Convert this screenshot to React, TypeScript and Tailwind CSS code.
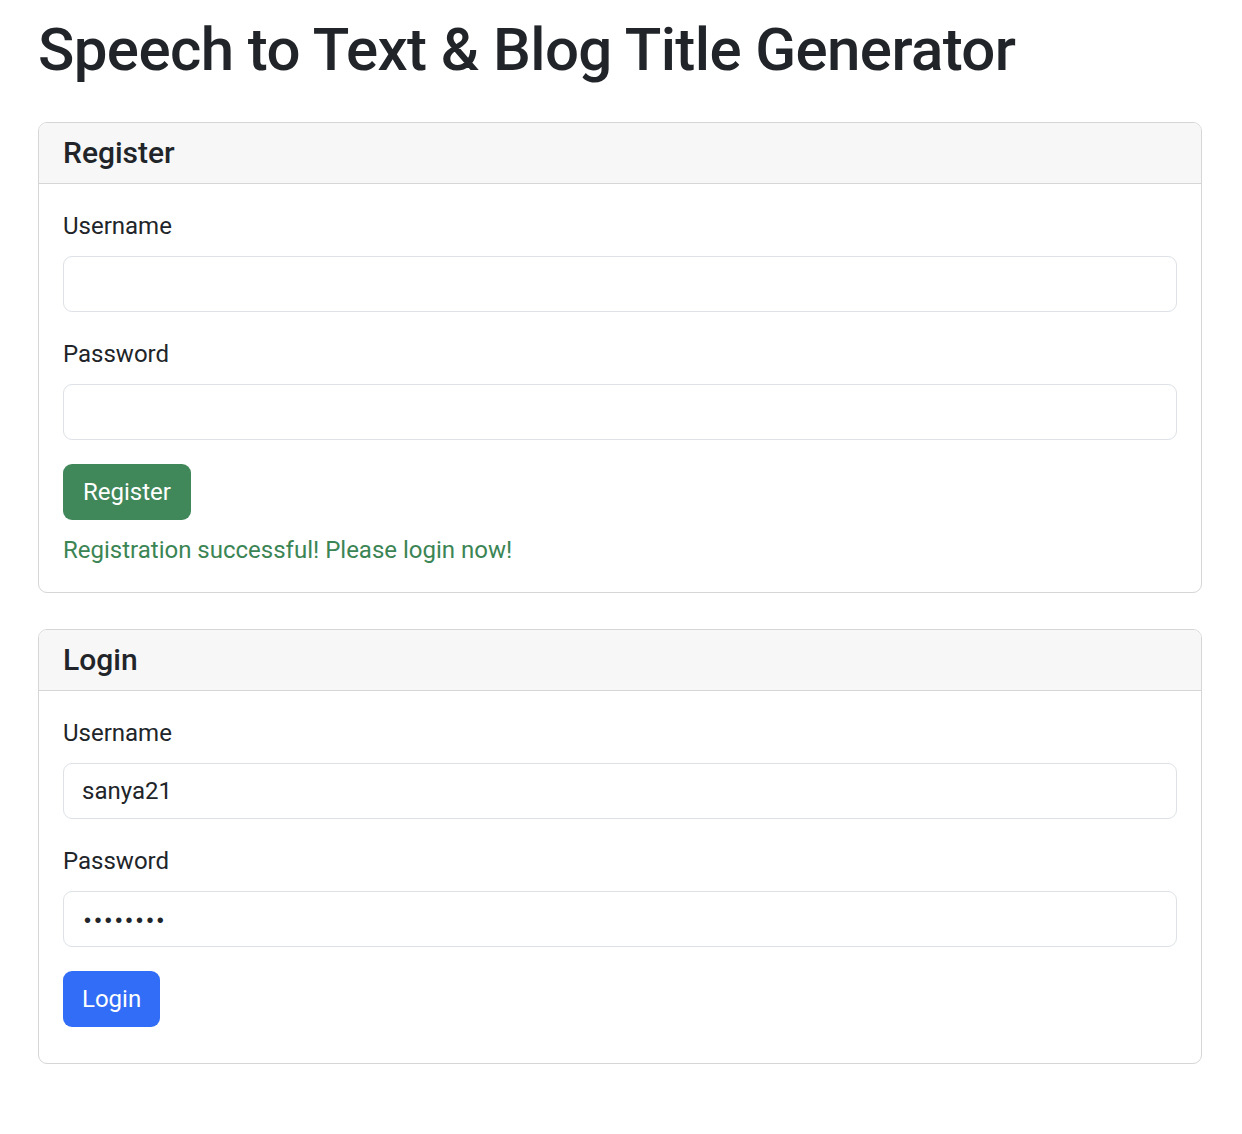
import React, { useState } from "react";

const font = { fontFamily: "Roboto, 'Liberation Sans', sans-serif" };
const dotsFont = { fontFamily: "'Liberation Sans', Arial, sans-serif" };

const Field = ({
  label,
  type = "text",
  value,
  onChange,
}: {
  label: string;
  type?: string;
  value: string;
  onChange: (v: string) => void;
}) => (
  <div className="mb-6">
    <label className="mb-3 block text-[24px] leading-[36px] text-[#212529]">
      {label}
    </label>
    <input
      type={type}
      value={value}
      onChange={(e) => onChange(e.target.value)}
      className={
        type === "password"
          ? "block h-[56px] w-full rounded-[9px] border border-[#dee2e6] bg-white px-[20px] pt-[3px] text-[20px] leading-[36px] tracking-[3.4px] text-[#212529] outline-none"
          : "block h-[56px] w-full rounded-[9px] border border-[#dee2e6] bg-white px-[18px] text-[24px] leading-[36px] text-[#212529] outline-none"
      }
      style={type === "password" ? dotsFont : font}
    />
  </div>
);

const Card = ({
  title,
  children,
}: {
  title: string;
  children: React.ReactNode;
}) => (
  <div className="mb-9 overflow-hidden rounded-[9px] border border-[#d6d6d6]">
    <div className="border-b border-[#d6d6d6] bg-[#f7f7f7] px-6 py-3">
      <h5 className="text-[30px] font-medium leading-[36px] text-[#212529]">
        {title}
      </h5>
    </div>
    <div className="p-6">{children}</div>
  </div>
);

export default function App() {
  const [regUser, setRegUser] = useState("");
  const [regPass, setRegPass] = useState("");
  const [user, setUser] = useState("sanya21");
  const [pass, setPass] = useState("password");

  return (
    <div className="min-h-screen bg-white" style={font}>
      <div className="pl-[38px] pr-[40px] pt-[14px]">
        <h1 className="mb-9 text-[60px] font-medium leading-[72px] tracking-[-0.6px] text-[#212529]">
          Speech to Text &amp; Blog Title Generator
        </h1>

        <Card title="Register">
          <Field label="Username" value={regUser} onChange={setRegUser} />
          <Field
            label="Password"
            type="password"
            value={regPass}
            onChange={setRegPass}
          />
          <button className="mb-3 h-[56px] rounded-[9px] bg-[#40875a] px-[20px] text-[24px] leading-[36px] text-white">
            Register
          </button>
          <p className="text-[24px] leading-[36px] text-[#3b8555]">
            Registration successful! Please login now!
          </p>
        </Card>

        <Card title="Login">
          <Field label="Username" value={user} onChange={setUser} />
          <Field
            label="Password"
            type="password"
            value={pass}
            onChange={setPass}
          />
          <button className="mb-3 h-[56px] rounded-[9px] bg-[#316df6] px-[19px] text-[24px] leading-[36px] text-white">
            Login
          </button>
        </Card>
      </div>
    </div>
  );
}
